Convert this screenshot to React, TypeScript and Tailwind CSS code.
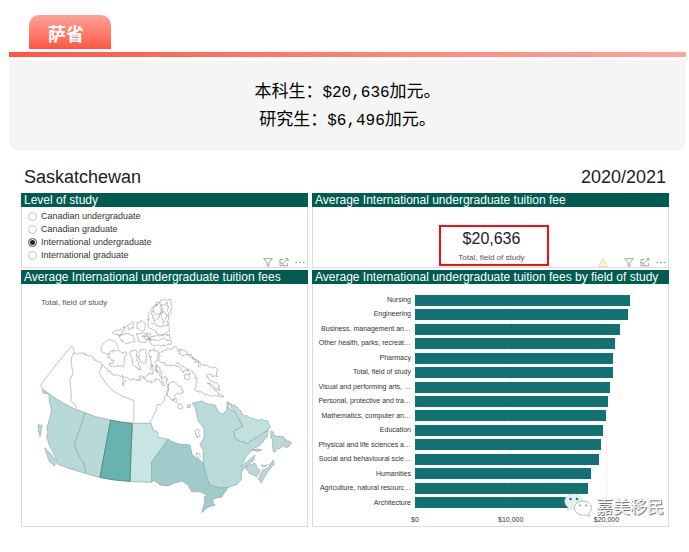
import type { ReactNode } from "react";

type Point = [number, number];

/* Deterministic noise, so that each coast keeps its outline between renders. */
function noise(seed: number) {
  let s = seed * 7919 + 17;
  return () => {
    s = (s * 16807) % 2147483647;
    return s / 2147483647 - 0.5;
  };
}

/* Splits every segment into short steps and shifts them to give a rugged shoreline. */
function coast(source: string, amount: number, closed = true) {
  const pts = source.split(" ").map((p) => p.split(",").map(Number) as Point);
  const rand = noise(Math.round(pts[0][0] + pts[0][1]));
  const out: string[] = [];
  const last = closed ? pts.length : pts.length - 1;
  for (let i = 0; i < last; i++) {
    const a = pts[i];
    const b = pts[(i + 1) % pts.length];
    const steps = amount ? Math.max(1, Math.round(Math.hypot(b[0] - a[0], b[1] - a[1]) / 1.5)) : 1;
    for (let k = 0; k < steps; k++) {
      const t = k / steps;
      const j = k === 0 ? 0 : amount;
      const x = a[0] + (b[0] - a[0]) * t + rand() * j;
      const y = a[1] + (b[1] - a[1]) * t + rand() * j;
      out.push(`${x.toFixed(1)},${y.toFixed(1)}`);
    }
  }
  if (!closed) out.push(pts[pts.length - 1].join(","));
  return `M${out.join("L")}${closed ? "Z" : ""}`;
}

const provinces = [
  { name: "British Columbia", fill: "#b9d9d8", rough: 0, d: "42.7,389 52,396 63,403 74,408.5 85,412.7 80,429 74.3,445 79,456 84,463 86,473.5 71,469 57.3,464 55,456 52,450 50,446.7 48,441 46.7,436.7 48,432 46.7,428 49.3,420 51.7,410 49.3,402 49,394 43,393" },
  { name: "Alberta", fill: "#b9d9d8", rough: 0, d: "85,412.7 97,417 110.7,420 105,450 100,477.5 86,473.5 84,463 79,456 74.3,445 80,429" },
  { name: "Manitoba", fill: "#c9e4e4", rough: 0, d: "132.3,423.3 151,423.3 153,430 157.7,432 158,437.5 162,438 168,439.3 160,451 151.7,461.7 151.7,482.3 130,481.5" },
  { name: "Ontario", fill: "#a1caca", rough: 0.7, d: "168,439.3 178.3,444 190,445 192.3,455 203.3,462.7 206.7,476.7 210,485 220,487.7 228.3,487.3 222,496.7 213.3,499 213,503 215,505 207,507.5 201.7,512.7 204.3,503.3 204.3,496.7 208,496 200,491.7 191.7,491.7 188.3,485 181.7,481 173.3,483.3 166.7,486 160,485 153.3,480 151.7,482 151.7,461.7 160,451" },
  { name: "Quebec", fill: "#b9d9da", rough: 0.6, d: "192.3,403 201.7,401 208,404 215,405 218.3,411.7 223.3,414 226.7,410 227.3,401.7 229,408 236,413 242.7,426.7 234,431 236,439.3 246.7,443.3 268.3,430 267.3,436.7 260,445 251.7,450 245,458 241,466.7 255,455 253,461 242,470 241,480 236,485 228.3,487.3 220,487.7 210,485 206.7,476.7 203.3,462.7 203.3,450 200,445 204,436.7 204,428 198.3,421 195,407" },
  { name: "Labrador", fill: "#c2e0df", rough: 1.4, d: "227.3,401.7 238.3,408.3 243.3,415 256.7,420 266.7,420 270.7,426.7 268.3,430 246.7,443.3 236,439.3 234,431 242.7,426.7 236,413" },
  { name: "Newfoundland", fill: "#b9d9d8", rough: 2, d: "271,431 276,436 283.3,436.7 287,441 291.5,443 288.3,447 281.7,446.7 273.3,451.7 272,442" },
  { name: "New Brunswick", fill: "#b9d9d8", rough: 0.8, d: "245,467 255,463.3 257,468 260,470 256.7,476.7 249,473.3" },
  { name: "Nova Scotia", fill: "#b9d9d8", rough: 1, d: "273,460 274.3,464 266.7,473.3 261.7,482.7 258.3,479 262,471 269,467" },
  { name: "Prince Edward Island", fill: "#c9e4e4", rough: 0.5, d: "261,465 266,466 268,464 264,467" },
  { name: "Anticosti", fill: "#b9d9d8", rough: 0, d: "252,450 257,449 262,450 257,451.5" },
  { name: "Haida Gwaii", fill: "#b9d9d8", rough: 0.6, d: "38,425 42,425 41,431 40,437 38.5,431" },
  { name: "Vancouver Island", fill: "#b9d9d8", rough: 0.8, d: "44.5,448 50,453 55,460 55,466 49,461" },
  { name: "Saskatchewan", fill: "#68b2b0", rough: 0, d: "110.7,420 121,422 132.3,423.3 131,452 130,481.5 114,480 100,477.5 105,450" },
];

const islands = [
  "110,352 118,350 123,354 126,352 124,366 118,367 109,365 114,360 107,357",
  "113,332 121,329 126,327 122,334 118,336",
  "127,326 133,322 134,328 129,330",
  "119,337 125,333 133,335 135,342 128,343 122,342",
  "137,322 142,321 146,326 143,331 138,329",
  "136,334 144,333 148,337 145,343 138,341",
  "142,336 151,334 149,340",
  "149,328 147.7,316 153.3,306 162,300 170.7,299 171,312 167,322 170,331 160,335 155,331",
  "155,307 158,302 163,309 159,318 154,322 152,315",
  "161,306 167,302 168,315 163,323",
  "149,338 158,335 170,335 171,343 163,346 151,344",
  "130,352 135,350 138,361 141,370 134,366",
  "140,350 146,350 147,358 144,364 139,359",
  "149,350 155,349 158,355 155,363 158,372 152,367",
  "174,347 183,350 193,357 200,364 209,367 216.7,368 217,377 208,374 207,378 218,384 220,391 213,386 207,383 216,391 224,397 211,396 203,393 195,390 197,382 195,374 188,369 183,373 177,366 167,365 160,362 159,353 165,350",
  "185,374 190,373 190,378 186,379",
  "168,387 173,381 179,386 183,393 176,394 173,400 167,396",
  "172,400 177,399 176,403",
  "178,405 181,404 183,408 180,409",
  "187,405 190,404 190,408 187,408",
  "195,431 198,429 200,435 197,438",
  "196,453 200,454 199,458 197,457",
];

const coastLines = [
  { d: "40.7,385 55,366 71.7,346 74,349 73.3,354", rough: 0 },
  { d: "40.7,385 42.7,389", rough: 0 },
  { d: "110,355 102,352 101,347 104,343 108.3,339.3 114,341 116.7,344 118.3,348.3", rough: 0.6 },
  { d: "73.3,354 71,363 73,372 70,381.7 71,392 72,402 76.7,407.7", rough: 1.6 },
  { d: "73.3,354 81.7,353.5 92,355.7 97,362 102,365 111,373 123,377 137,380 147,375 153,374 150,365 155,367 160,376 167,378 168,392 163,402 157,406 155,412 153,417 151,423", rough: 3 },
  { d: "137,380 141,376 146,379 151,383 157,379 163,386", rough: 3.5 },
  { d: "156,366 160,368 162,380 166,386", rough: 3 },
  { d: "122,376 123,386 126,379", rough: 1.5 },
  { d: "177,351 183,355 189,356 197,362 201,366", rough: 4 },
  { d: "176,364 183,366 189,371", rough: 4 },
  { d: "153,311 158,314 164,311 169,317", rough: 3 },
  { d: "151,323 158,326 165,326 170,322", rough: 3 },
  { d: "148,339 154,340 162,339 170,341", rough: 3 },
  { d: "102,365 99.3,373.3 105,382 112,390 122,396 134,400.7 133.7,423.3", rough: 0 },
];

function CanadaMap() {
  return (
    <svg viewBox="22 284 285 242" className="col-start-1 row-start-1 block w-full" role="img" aria-label="Map of Canada">
      <g fill="none" stroke="#989898" strokeWidth="0.6" strokeLinejoin="round">
        {coastLines.map((l) => <path key={l.d} d={coast(l.d, l.rough, false)} />)}
        {islands.map((d) => <path key={d} d={coast(d, 2.6)} />)}
      </g>
      {provinces.map((p) => (
        <path key={p.name} d={coast(p.d, p.rough)} fill={p.fill} strokeLinejoin="round"
          stroke={p.name === "Saskatchewan" ? "#45706f" : "#8fa9a8"} strokeWidth="0.7" />
      ))}
    </svg>
  );
}

const fields = [
  { label: "Nursing", value: 22500 },
  { label: "Engineering", value: 22250 },
  { label: "Business, management an…", value: 21400 },
  { label: "Other health, parks, recreat…", value: 20900 },
  { label: "Pharmacy", value: 20700 },
  { label: "Total, field of study", value: 20636 },
  { label: "Visual and performing arts, …", value: 20400 },
  { label: "Personal, protective and tra…", value: 20120 },
  { label: "Mathematics, computer an…", value: 19950 },
  { label: "Education", value: 19630 },
  { label: "Physical and life sciences a…", value: 19400 },
  { label: "Social and behavioural scie…", value: 19250 },
  { label: "Humanities", value: 18420 },
  { label: "Agriculture, natural resourc…", value: 18100 },
  { label: "Architecture", value: 17300 },
];
const axisMax = 25700;
const ticks = [0, 10000, 20000];

function Panel({ title, children }: { title: string; children: ReactNode }) {
  return (
    <section className="relative flex flex-col border border-[#dcdcdc] bg-white">
      <h2 className="-mx-px -mt-px h-[14px] bg-[#005b50] px-[3px] text-[12px] leading-[14px] whitespace-nowrap text-white">{title}</h2>
      {children}
    </section>
  );
}

function PanelTools({ warning = false }: { warning?: boolean }) {
  return (
    <div className="absolute right-[2px] bottom-0 flex items-center gap-[6px] text-[#8d8d8d]">
      {warning && (
        <button type="button" aria-label="Warning" className="mr-[10px]">
          <svg width="10" height="9" viewBox="0 0 10 9" fill="none" stroke="#f3d36b" strokeWidth="0.9" className="block">
            <path d="M5 0.8 9.3 8.3H0.7ZM5 3.2V5.8M5 6.5V7.4" />
          </svg>
        </button>
      )}
      <button type="button" aria-label="Filters">
        <svg width="10" height="9" viewBox="0 0 10 9" fill="none" stroke="currentColor" strokeWidth="0.8" className="block">
          <path d="M0.6 0.6H9.4L6 4.6V8.4L4 7.4V4.6Z" />
        </svg>
      </button>
      <button type="button" aria-label="Focus mode">
        <svg width="10" height="9" viewBox="0 0 10 9" fill="none" stroke="currentColor" strokeWidth="0.8" className="block">
          <path d="M4.500 1.500H1V7.800H8.700V5.200M1 5H4V7.800M5 4.300 8.700 0.800M6.300 0.600H9V3.200" />
        </svg>
      </button>
      <button type="button" aria-label="More options">
        <svg width="10" height="9" viewBox="0 0 10 9" fill="currentColor" className="block">
          <circle cx="1.2" cy="4.5" r="0.8" /><circle cx="5" cy="4.5" r="0.8" /><circle cx="8.8" cy="4.5" r="0.8" />
        </svg>
      </button>
    </div>
  );
}

function LevelOption({ label, checked = false }: { label: string; checked?: boolean }) {
  return (
    <label className="flex h-[13px] items-center gap-[4px] text-[9px] leading-[13px] text-[#333]">
      <input type="radio" name="level" defaultChecked={checked}
        className="m-0 size-[9px] appearance-none rounded-full border border-[#c4c4c4] bg-white checked:border-[#777] checked:bg-[#222] checked:shadow-[inset_0_0_0_1px_white]" />
      {label}
    </label>
  );
}

function TuitionChart() {
  return (
    <div className="pt-[9px] pr-[7px] pl-[2px] text-[7px] text-[#333]">
      <div className="flex h-[217px]">
        <ul className="flex w-[96px] flex-col text-right">
          {fields.map((f) => <li key={f.label} className="flex flex-1 items-center justify-end whitespace-nowrap">{f.label}</li>)}
        </ul>
        <div className="relative ml-[4px] flex flex-1 flex-col">
          {ticks.map((t) => (
            <i key={t} className="absolute inset-y-0 w-px bg-[#f1f3f3]" style={{ left: `${(t / axisMax) * 100}%` }} />
          ))}
          {fields.map((f) => (
            <div key={f.label} className="relative flex flex-1 items-center">
              <div className="h-[11px] bg-[#137173]" style={{ width: `${(f.value / axisMax) * 100}%` }} />
            </div>
          ))}
        </div>
      </div>
      <div className="relative ml-[100px] mt-[6px] h-[8px] leading-[8px]">
        {ticks.map((t) => (
          <span key={t} className="absolute -translate-x-1/2" style={{ left: `${(t / axisMax) * 100}%` }}>${t.toLocaleString("en-US")}</span>
        ))}
      </div>
    </div>
  );
}

function Watermark() {
  return (
    <div className="absolute right-[4px] bottom-[8px] flex items-center gap-[4px]">
      <svg width="28" height="25" viewBox="0 0 28 25" className="block" aria-hidden="true">
        <path d="M9.500 1C4.300 1 .8 4.300 .8 8.300c0 2.500 1.300 4.500 3.200 5.800L3.200 17.500 6.700 15.500c4.800 1.200 11.500-.7 11.500-7.200C18.200 4.300 14.700 1 9.500 1Z" fill="#e3f1f1" stroke="#b3cccc" strokeWidth="0.6" />
        <path d="M19 8c-5 0-8.500 3-8.500 7s3.500 7.200 8.500 7.200c1.200 0 2.300-.2 3.300-.5L25.500 23.500 24.700 20.300C26.500 19 27.400 17.200 27.400 15 27.400 11 24 8 19 8Z" fill="#fff" stroke="#888" strokeWidth="0.7" strokeDasharray="2.500 0.700" />
        <g fill="#287b7a"><circle cx="6.5" cy="6" r="1.3" /><circle cx="13" cy="6" r="1.3" /></g>
        <g fill="#6d9f9d"><circle cx="16" cy="12.5" r="1" /><circle cx="22" cy="12.5" r="1" /></g>
      </svg>
      <span className="font-['Noto_Sans_CJK_SC',sans-serif] text-[17px] leading-[18px] text-white [text-shadow:1px_1px_0_#777,0_0_1px_#999]">嘉美移民</span>
    </div>
  );
}

export default function App() {
  return (
    <main className="bg-white pt-[15px] pr-[3px] pl-[9px] font-['Liberation_Sans','Noto_Sans_CJK_SC',sans-serif]">
      <h1 className="ml-[20px] h-[34px] w-[82px] rounded-t-[10px] bg-linear-to-b from-[#ffa198] to-[#ff5540] pl-[19px] font-['Noto_Sans_CJK_SC',sans-serif] text-[18px] leading-[36px] font-bold text-white">萨省</h1>
      <div className="mt-[3px] h-[5px] bg-linear-to-r from-[#ff5540] to-[#ffa59d]" />
      <div className="mt-[3px] rounded-b-[10px] bg-[#f5f5f5] pt-[16px] pb-[19px] text-center font-['Noto_Sans_CJK_SC',sans-serif] text-[17px] leading-[28px] text-black">
        <p>本科生：<span className="font-['Liberation_Mono',monospace] text-[16px] leading-none">$20,636</span>加元。</p>
        <p>研究生：<span className="font-['Liberation_Mono',monospace] text-[16px] leading-none">$6,496</span>加元。</p>
      </div>

      <div className="mt-[16px] mr-[17px] ml-[12px]">
        <header className="flex justify-between px-[3px] pb-[6px] text-[18px] leading-[20px] text-[#1c1c1c]">
          <span>Saskatchewan</span>
          <span>2020/2021</span>
        </header>
        <div className="grid grid-cols-[287fr_357fr] grid-rows-[75px_auto] gap-x-[4px] gap-y-[2px]">
          <Panel title="Level of study">
            <fieldset className="pt-[3px] pl-[6px]">
              <LevelOption label="Canadian undergraduate" />
              <LevelOption label="Canadian graduate" />
              <LevelOption label="International undergraduate" checked />
              <LevelOption label="International graduate" />
            </fieldset>
            <PanelTools />
          </Panel>
          <Panel title="Average International undergraduate tuition fee">
            <div className="pt-[18px] pl-[6px]">
              <div className="mx-auto flex h-[41px] w-[110px] flex-col items-center border-2 border-[#f80d12] pr-[4px] text-[#222]">
                <span className="mt-[2px] text-[16px] leading-[20px]">$20,636</span>
                <span className="mt-[3px] text-[8px] leading-[12px] text-[#555]">Total, field of study</span>
              </div>
            </div>
            <PanelTools warning />
          </Panel>
          <Panel title="Average International undergraduate tuition fees">
            <div className="grid">
              <CanadaMap />
              <span className="col-start-1 row-start-1 mt-[13px] ml-[19px] text-[8px] leading-[12px] text-[#555]">Total, field of study</span>
            </div>
          </Panel>
          <Panel title="Average International undergraduate tuition fees by field of study">
            <TuitionChart />
            <Watermark />
          </Panel>
        </div>
      </div>
    </main>
  );
}
